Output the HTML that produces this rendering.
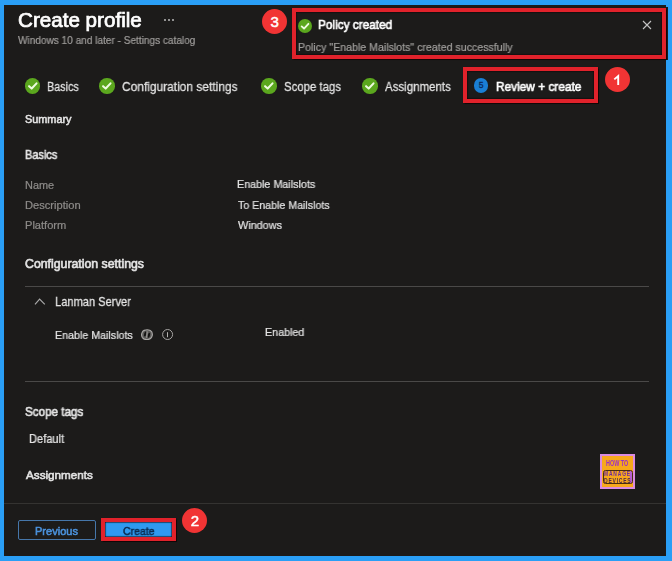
<!DOCTYPE html>
<html><head><meta charset="utf-8"><style>
html,body{margin:0;padding:0}
body{width:672px;height:561px;background:#2a9ff6;position:relative;overflow:hidden;font-family:"Liberation Sans",sans-serif}
.t{position:absolute;white-space:nowrap;line-height:1;will-change:transform;transform-origin:0 0}
.r{position:absolute;font-family:"Liberation Sans",sans-serif}
.c{position:absolute;border-radius:50%;overflow:hidden}
</style></head><body>
<div class="r" style="left:4px;top:5px;width:662px;height:551px;background:#1c1b1a;"></div>
<div class="t" style="left:18.23px;top:9.99px;font-size:20.45px;color:#ffffff;-webkit-text-stroke:0.72px #ffffff;transform:scaleX(1.0088);">Create profile</div>
<div class="r" style="left:164px;top:19px;width:2px;height:2px;background:#929292;"></div>
<div class="r" style="left:168px;top:19px;width:2px;height:2px;background:#929292;"></div>
<div class="r" style="left:172px;top:19px;width:2px;height:2px;background:#929292;"></div>
<div class="t" style="left:18.06px;top:35.08px;font-size:10.65px;color:#a09e9c;-webkit-text-stroke:0.21px #a09e9c;transform:scaleX(0.9458);">Windows 10 and later - Settings catalog</div>
<div class="r" style="left:292px;top:7px;width:376px;height:53px;background:#1c1b1a;"></div>
<div class="r" style="left:292px;top:8px;width:366px;height:43px;border:4px solid #e1222b;border-left-width:4px;box-shadow:inset 0 0 1px 0.5px #120606, 0 0 1px 0.5px #120606;"></div>
<div class="c" style="left:262.10px;top:8.90px;width:25px;height:25px;background:#f13434;"><div style="position:absolute;left:0;top:-0.3px;width:25px;height:25px;line-height:25px;text-align:center;color:#fff;font-size:15px;font-weight:400;-webkit-text-stroke:0.5px #fff">3</div></div>
<div class="c" style="left:298.00px;top:19.00px;width:14px;height:14px;background:#5ba71e;"><svg width="14" height="14" viewBox="0 0 16 16" style="position:absolute;left:0;top:0"><path d="M4.2 8.4 L6.9 10.9 L11.9 5.5" fill="none" stroke="#eefbe0" stroke-width="2.1" stroke-linecap="round" stroke-linejoin="round"/></svg></div>
<div class="t" style="left:318.33px;top:19.31px;font-size:12.75px;color:#ffffff;-webkit-text-stroke:0.64px #ffffff;transform:scaleX(0.9259);">Policy created</div>
<div class="t" style="left:297.94px;top:41.88px;font-size:11.25px;color:#a09e9c;-webkit-text-stroke:0.23px #a09e9c;transform:scaleX(0.9438);">Policy "Enable Mailslots" created successfully</div>
<svg style="position:absolute;left:642px;top:20px" width="10" height="10" viewBox="0 0 10 10"><path d="M1 1L9 9M9 1L1 9" stroke="#c4c4c4" stroke-width="1.1"/></svg>
<div class="c" style="left:24.75px;top:78.25px;width:15.5px;height:15.5px;background:#5ba71e;"><svg width="15.5" height="15.5" viewBox="0 0 16 16" style="position:absolute;left:0;top:0"><path d="M4.2 8.4 L6.9 10.9 L11.9 5.5" fill="none" stroke="#eefbe0" stroke-width="2.1" stroke-linecap="round" stroke-linejoin="round"/></svg></div>
<div class="t" style="left:47.12px;top:80.25px;font-size:13.05px;color:#e4e4e4;-webkit-text-stroke:0.26px #e4e4e4;transform:scaleX(0.8260);">Basics</div>
<div class="c" style="left:99.05px;top:78.25px;width:15.5px;height:15.5px;background:#5ba71e;"><svg width="15.5" height="15.5" viewBox="0 0 16 16" style="position:absolute;left:0;top:0"><path d="M4.2 8.4 L6.9 10.9 L11.9 5.5" fill="none" stroke="#eefbe0" stroke-width="2.1" stroke-linecap="round" stroke-linejoin="round"/></svg></div>
<div class="t" style="left:121.82px;top:80.25px;font-size:13.05px;color:#e4e4e4;-webkit-text-stroke:0.26px #e4e4e4;transform:scaleX(0.9150);">Configuration settings</div>
<div class="c" style="left:261.45px;top:78.25px;width:15.5px;height:15.5px;background:#5ba71e;"><svg width="15.5" height="15.5" viewBox="0 0 16 16" style="position:absolute;left:0;top:0"><path d="M4.2 8.4 L6.9 10.9 L11.9 5.5" fill="none" stroke="#eefbe0" stroke-width="2.1" stroke-linecap="round" stroke-linejoin="round"/></svg></div>
<div class="t" style="left:283.89px;top:80.25px;font-size:13.05px;color:#e4e4e4;-webkit-text-stroke:0.26px #e4e4e4;transform:scaleX(0.8730);">Scope tags</div>
<div class="c" style="left:362.25px;top:78.25px;width:15.5px;height:15.5px;background:#5ba71e;"><svg width="15.5" height="15.5" viewBox="0 0 16 16" style="position:absolute;left:0;top:0"><path d="M4.2 8.4 L6.9 10.9 L11.9 5.5" fill="none" stroke="#eefbe0" stroke-width="2.1" stroke-linecap="round" stroke-linejoin="round"/></svg></div>
<div class="t" style="left:385.29px;top:80.25px;font-size:13.05px;color:#e4e4e4;-webkit-text-stroke:0.26px #e4e4e4;transform:scaleX(0.8810);">Assignments</div>
<div class="c" style="left:473.75px;top:78.45px;width:14.5px;height:14.5px;background:#1a7fd5;"><div style="position:absolute;left:0;top:0;width:14.5px;height:14.5px;line-height:14.5px;text-align:center;color:#0a2a5c;font-size:8.5px;font-weight:400;-webkit-text-stroke:0.3px #0a2a5c">5</div></div>
<div class="t" style="left:495.62px;top:80.99px;font-size:12.18px;color:#ffffff;-webkit-text-stroke:0.61px #ffffff;transform:scaleX(0.9753);">Review + create</div>
<div class="r" style="left:463px;top:67px;width:127px;height:28px;border:4px solid #e1222b;border-left-width:4px;box-shadow:inset 0 0 1px 0.5px #120606, 0 0 1px 0.5px #120606;"></div>
<div class="c" style="left:605.00px;top:67.20px;width:25px;height:25px;background:#f13434;"><div style="position:absolute;left:0;top:-0.3px;width:25px;height:25px;line-height:25px;text-align:center;color:#fff;font-size:15px;font-weight:400;-webkit-text-stroke:0.5px #fff"><svg width="25" height="25" viewBox="0 0 25 25" style="position:absolute;left:0;top:0.3px"><path d="M9.3 12.4 L13.2 9.0 L13.2 18" fill="none" stroke="#fff" stroke-width="1.9" stroke-linejoin="miter"/></svg></div></div>
<div class="t" style="left:25.27px;top:113.56px;font-size:10.8px;color:#e4e4e4;-webkit-text-stroke:0.54px #e4e4e4;transform:scaleX(1.0060);">Summary</div>
<div class="t" style="left:24.88px;top:149.97px;font-size:11.85px;color:#e4e4e4;-webkit-text-stroke:0.59px #e4e4e4;transform:scaleX(0.9236);">Basics</div>
<div class="t" style="left:24.61px;top:179.66px;font-size:10.8px;color:#8d8b89;-webkit-text-stroke:0.22px #8d8b89;transform:scaleX(1.0119);">Name</div>
<div class="t" style="left:237.43px;top:179.40px;font-size:11.1px;color:#e4e4e4;-webkit-text-stroke:0.22px #e4e4e4;transform:scaleX(0.9681);">Enable Mailslots</div>
<div class="t" style="left:24.60px;top:199.96px;font-size:10.8px;color:#8d8b89;-webkit-text-stroke:0.22px #8d8b89;transform:scaleX(1.0311);">Description</div>
<div class="t" style="left:238.07px;top:199.70px;font-size:11.1px;color:#e4e4e4;-webkit-text-stroke:0.22px #e4e4e4;transform:scaleX(0.9589);">To Enable Mailslots</div>
<div class="t" style="left:24.60px;top:219.86px;font-size:10.8px;color:#8d8b89;-webkit-text-stroke:0.22px #8d8b89;transform:scaleX(1.0274);">Platform</div>
<div class="t" style="left:238.27px;top:219.60px;font-size:11.1px;color:#e4e4e4;-webkit-text-stroke:0.22px #e4e4e4;transform:scaleX(0.9777);">Windows</div>
<div class="t" style="left:25.09px;top:258.22px;font-size:12.15px;color:#e4e4e4;-webkit-text-stroke:0.61px #e4e4e4;transform:scaleX(1.0130);">Configuration settings</div>
<div class="r" style="left:25px;top:286px;width:624px;height:1px;background:#4a4948;"></div>
<svg style="position:absolute;left:34px;top:298px" width="12" height="8" viewBox="0 0 12 8"><path d="M1 6.4L5.6 1.2L10.8 6.4" fill="none" stroke="#a9a9a9" stroke-width="1.2"/></svg>
<div class="t" style="left:54.80px;top:296.19px;font-size:12.83px;color:#e4e4e4;-webkit-text-stroke:0.26px #e4e4e4;transform:scaleX(0.8650);">Lanman Server</div>
<div class="t" style="left:55.03px;top:329.58px;font-size:11.25px;color:#e4e4e4;-webkit-text-stroke:0.23px #e4e4e4;transform:scaleX(0.9490);">Enable Mailslots</div>
<svg style="position:absolute;left:140.5px;top:328.5px" width="12" height="11" viewBox="0 0 12 11"><path d="M3.2 1.4 C5 0.6 7.5 0.6 9.3 1.6 C11 2.6 11.6 4.6 11.2 6.6 C10.8 8.6 9.2 10.2 6.8 10.5 C4.4 10.8 2.2 10 1.2 8.2 C0.4 6.6 0.6 4.4 1.4 3 C1.8 2.3 2.4 1.8 3.2 1.4 Z" fill="#5a5957" stroke="#a9a7a5" stroke-width="1.2"/><ellipse cx="4.2" cy="5" rx="1.1" ry="2.6" transform="rotate(15 4.2 5)" fill="#151413"/><ellipse cx="7.9" cy="6.3" rx="1.1" ry="2.6" transform="rotate(15 7.9 6.3)" fill="#151413"/><path d="M6.2 2.4 L5.6 8.8" stroke="#9a9896" stroke-width="1.2"/></svg><svg style="position:absolute;left:162px;top:329px" width="12" height="12" viewBox="0 0 12 12"><circle cx="5.6" cy="5.5" r="5.0" fill="none" stroke="#a5a3a1" stroke-width="1"/><path d="M5.5 3.2V8.2" stroke="#b5b3b1" stroke-width="1"/></svg><div class="t" style="left:264.93px;top:327.33px;font-size:10.95px;color:#e4e4e4;-webkit-text-stroke:0.22px #e4e4e4;transform:scaleX(0.9792);">Enabled</div>
<div class="r" style="left:25px;top:381px;width:624px;height:1px;background:#4a4948;"></div>
<div class="t" style="left:25.06px;top:405.56px;font-size:12.45px;color:#e4e4e4;-webkit-text-stroke:0.62px #e4e4e4;transform:scaleX(0.9370);">Scope tags</div>
<div class="t" style="left:28.70px;top:434.17px;font-size:11.85px;color:#e4e4e4;-webkit-text-stroke:0.24px #e4e4e4;transform:scaleX(0.9343);">Default</div>
<div class="t" style="left:25.57px;top:468.90px;font-size:11.7px;color:#e4e4e4;-webkit-text-stroke:0.58px #e4e4e4;transform:scaleX(0.9983);">Assignments</div>
<div class="r" style="left:600px;top:453.5px;width:35px;height:35.5px;background:#d98be0;"></div>
<div class="r" style="left:601.8px;top:455.8px;width:31.7px;height:31.1px;background:#f7a81c;"></div>
<div class="r" style="left:602.8px;top:469.5px;width:30.1px;height:14.5px;border:1px solid #4a2e0c;border-radius:2.5px;box-sizing:border-box;background:linear-gradient(90deg,#f7a81c 0,#f7a81c 90%,#b55fd0 94%,#b55fd0 100%);"></div>
<svg style="position:absolute;left:0;top:0" width="672" height="561" viewBox="0 0 672 561"><g font-family="Liberation Sans" font-weight="700"><text x="606" y="465.9" font-size="8.8" fill="#9b2fc6" textLength="22.2" lengthAdjust="spacingAndGlyphs">HOW TO</text><text x="604" y="476.4" font-size="7.4" font-weight="700" letter-spacing="1.3" fill="#6a2a9e" textLength="27" lengthAdjust="spacingAndGlyphs">MANAGE</text><text x="604" y="482.6" font-size="7.4" font-weight="700" letter-spacing="1.1" fill="#4e2848" textLength="27.5" lengthAdjust="spacingAndGlyphs">DEVICES</text></g></svg><div class="r" style="left:4px;top:503px;width:662px;height:1px;background:#343331;"></div>
<div class="r" style="left:18px;top:520px;width:78px;height:20px;border:1px solid #4677aa;box-sizing:border-box;border-radius:2px;"></div>
<div class="t" style="left:35.37px;top:525.78px;font-size:10.65px;color:#4b92dc;-webkit-text-stroke:0.53px #4b92dc;transform:scaleX(1.0367);">Previous</div>
<div class="r" style="left:105px;top:522px;width:67px;height:15px;background:#2f9af0;"></div>
<div class="r" style="left:101px;top:518px;width:67px;height:15px;border:4px solid #e1222b;border-left-width:4px;box-shadow:inset 0 0 1px 0.5px #120606, 0 0 1px 0.5px #120606;"></div>
<div class="t" style="left:122.74px;top:525.66px;font-size:10.8px;color:#0c2c50;-webkit-text-stroke:0.54px #0c2c50;transform:scaleX(0.9704);">Create</div>
<div class="c" style="left:182.30px;top:508.20px;width:25px;height:25px;background:#f13434;"><div style="position:absolute;left:0;top:-0.3px;width:25px;height:25px;line-height:25px;text-align:center;color:#fff;font-size:15px;font-weight:400;-webkit-text-stroke:0.5px #fff">2</div></div>
</body></html>
